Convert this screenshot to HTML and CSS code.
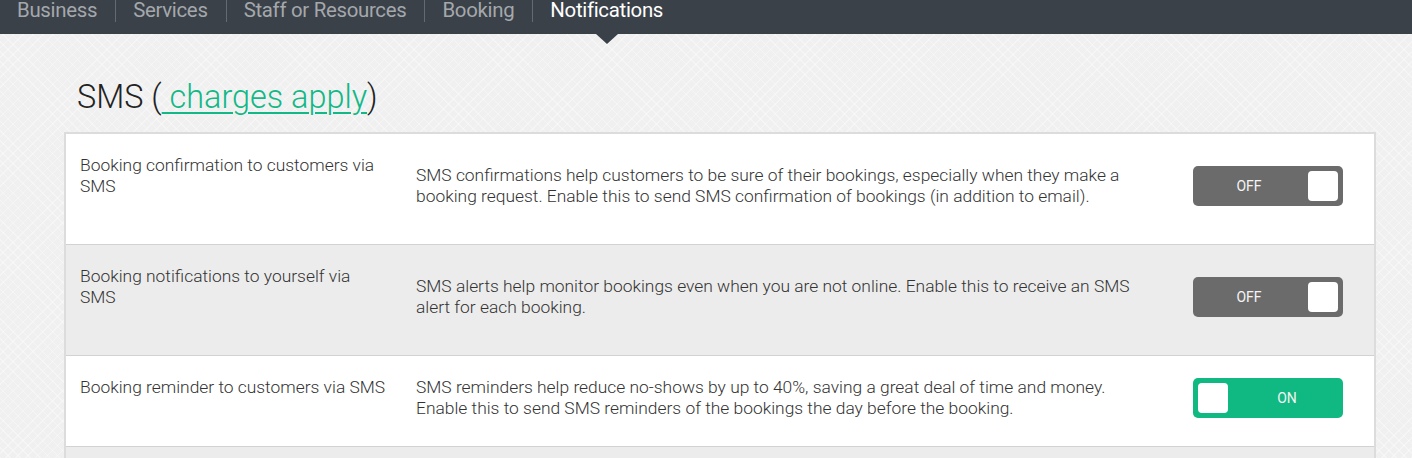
FILE: index.html
```html
<!DOCTYPE html>
<html lang="en">
<head>
<meta charset="utf-8">
<title>Notifications</title>
<link rel="stylesheet" href="styles.css">
</head>
<body>
<header class="topbar">
  <nav class="tabs">
    <a class="tab">Business</a>
    <a class="tab">Services</a>
    <a class="tab">Staff or Resources</a>
    <a class="tab">Booking</a>
    <a class="tab tab-active">Notifications</a>
  </nav>
</header>
<main class="page">
  <h1 class="title">SMS (<a class="title-link"> charges apply</a>)</h1>
  <section class="card">
    <div class="row">
      <div class="label">Booking confirmation to customers via SMS</div>
      <div class="desc">SMS confirmations help customers to be sure of their bookings, especially when they make a booking request. Enable this to send SMS confirmation of bookings (in addition to email).</div>
      <div class="toggle toggle-off"><span class="toggle-text">OFF</span><span class="knob"></span></div>
    </div>
    <div class="row row-alt">
      <div class="label">Booking notifications to yourself via SMS</div>
      <div class="desc">SMS alerts help monitor bookings even when you are not online. Enable this to receive an SMS alert for each booking.</div>
      <div class="toggle toggle-off"><span class="toggle-text">OFF</span><span class="knob"></span></div>
    </div>
    <div class="row">
      <div class="label">Booking reminder to customers via SMS</div>
      <div class="desc">SMS reminders help reduce no-shows by up to 40%, saving a great deal of time and money. Enable this to send SMS reminders of the bookings the day before the booking.</div>
      <div class="toggle toggle-on"><span class="knob"></span><span class="toggle-text">ON</span></div>
    </div>
    <div class="row row-alt row-empty"></div>
  </section>
</main>
</body>
</html>
```
FILE: styles.css
```css
* { box-sizing: border-box; }
html, body { margin: 0; padding: 0; }
body {
  font-family: Roboto, "Liberation Sans", sans-serif;
  color: #333;
  background-color: #f0f0f0;
  background-image:
    repeating-linear-gradient(45deg, rgba(255,255,255,0.35) 0 1px, transparent 1px 7px),
    repeating-linear-gradient(-45deg, rgba(255,255,255,0.35) 0 1px, transparent 1px 7px);
  overflow: hidden;
  height: 458px;
}
.topbar {
  background: #3b4148;
  height: 34px;
  position: relative;
}
.tabs {
  display: flex;
  align-items: flex-start;
}
.tab {
  display: block;
  font-size: 20.4px;
  line-height: 20px;
  height: 22px;
  color: #a4a8ad;
  padding: 0 18px 0 17px;
  border-left: 1px solid #646a71;
  letter-spacing: -0.3px;
}
.tab:first-child { border-left: none; }
.tab-active { color: #fff; position: relative; }
.tab-active::after {
  content: "";
  position: absolute;
  left: 50%;
  top: 34px;
  margin-left: -11px;
  border-left: 11px solid transparent;
  border-right: 11px solid transparent;
  border-top: 10px solid #3b4148;
}
.page {
  margin-left: 64px;
  width: 1312px;
  padding-top: 43px;
}
.title {
  margin: 0 0 15px 13px;
  font-size: 32.4px;
  line-height: 40px;
  font-weight: 300;
  color: #222;
}
.title-link {
  color: #12b886;
  text-decoration: underline;
  text-decoration-thickness: 2px;
  text-underline-offset: 4px;
  white-space: pre;
}
.card {
  border: 2px solid #dcdcdc;
  border-bottom: none;
  background: #fff;
}
.row {
  display: flex;
  align-items: center;
  padding: 21px 31px 27px 14px;
  border-bottom: 1px solid #d2d2d2;
  background: #fff;
  font-size: 17.4px;
  line-height: 21px;
  font-weight: 300;
}
.row-alt { background: #ececec; }
.row-empty { height: 11px; padding: 0; border-bottom: none; }
.label {
  align-self: flex-start;
  width: 308px;
  margin-right: 28px;
  margin-bottom: 20px;
  color: #333;
}
.desc {
  flex: 1;
  margin-right: 40px;
  color: #333;
}
.toggle {
  flex: 0 0 150px;
  height: 40px;
  border-radius: 5px;
  display: flex;
  align-items: center;
  padding: 0 5px;
}
.toggle-off { background: #6b6b6b; }
.toggle-on { background: #10b981; }
.toggle-text {
  flex: 1;
  text-align: center;
  color: #f4f4f4;
  font-size: 14px;
  font-weight: 400;
}
.toggle-off .toggle-text { padding-right: 8px; }
.toggle-on .toggle-text { padding-left: 8px; }
.knob {
  width: 30px;
  height: 30px;
  background: #fff;
  border-radius: 4px;
}
```
